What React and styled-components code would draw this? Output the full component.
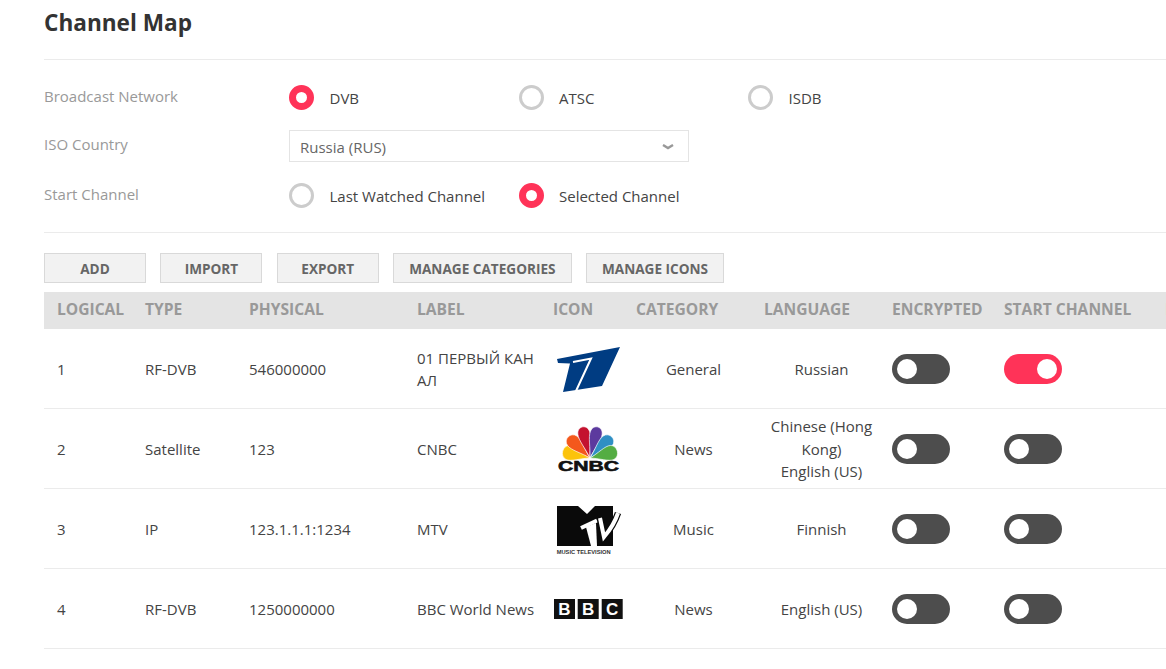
import React from 'react';
import styled, { createGlobalStyle } from 'styled-components';

const Global = createGlobalStyle`
  html, body { margin: 0; padding: 0; background: #fff; overflow: hidden; }
  body { font-family: "Open Sans", "Noto Sans", sans-serif; color: #444; }
`;

const Page = styled.div`
  width: 1400px;
  padding-left: 44px;
`;

const Title = styled.h1`
  margin: 0;
  height: 60px;
  box-sizing: border-box;
  padding-top: 6px;
  font-size: 22.6px;
  line-height: 34px;
  font-weight: 700;
  color: #333;
  border-bottom: 1px solid #ebebeb;
`;

const Form = styled.div`
  padding: 25px 0 24px;
  border-bottom: 1px solid #ebebeb;
`;

const FormRow = styled.div`
  display: flex;
  align-items: center;
  margin-bottom: ${(p) => p.$gap || 0}px;
`;

const FieldLabel = styled.div`
  width: 245px;
  font-size: 15px;
  color: #999;
  position: relative;
  top: -2px;
`;

const RadioOption = styled.label`
  width: 229.5px;
  display: flex;
  align-items: center;
  font-size: 15px;
  color: #444;
`;

const RadioMark = styled.span`
  width: 25px;
  height: 25px;
  box-sizing: border-box;
  border-radius: 50%;
  margin-right: 15.5px;
  border: ${(p) => (p.$on ? '7.5px solid #ff3358' : '3px solid #ccc')};
  background: #fff;
`;

const Select = styled.div`
  width: 400px;
  height: 32px;
  box-sizing: border-box;
  border: 1px solid #e4e4e4;
  padding: 1px 14px 0 10px;
  display: flex;
  align-items: center;
  justify-content: space-between;
  font-size: 15px;
  color: #666;
`;

const Toolbar = styled.div`
  display: flex;
  gap: 14.4px;
  padding-top: 20px;
  margin-bottom: 9px;
`;

const Button = styled.button`
  height: 30px;
  min-width: 102px;
  box-sizing: border-box;
  padding: 0 15px;
  border: 1.5px solid #d9d9d9;
  background: #f2f2f2;
  color: #666;
  font-family: inherit;
  font-size: 13.6px;
  font-weight: 700;
`;

const columns = '88px 104px 168px 136px 83px 128px 128px 112px 161px 120px';

const HeadRow = styled.div`
  display: grid;
  grid-template-columns: ${columns};
  height: 37px;
  box-sizing: border-box;
  padding-bottom: 4px;
  align-items: center;
  background: #e4e4e4;
`;

const HeadCell = styled.div`
  padding-left: 13px;
  font-size: 15.6px;
  font-weight: 700;
  color: #999;
  white-space: nowrap;
`;

const Row = styled.div`
  display: grid;
  grid-template-columns: ${columns};
  height: 80px;
  box-sizing: border-box;
  align-items: center;
  border-bottom: 1px solid #ebebeb;
`;

const Cell = styled.div`
  padding-left: 13px;
  font-size: 15px;
  line-height: 22.5px;
  color: #444;
  text-align: ${(p) => (p.$center ? 'center' : 'left')};
  word-break: break-all;
`;

const TextCell = styled(Cell)`
  padding-top: 1px;
`;

const LangCell = styled(TextCell)`
  word-break: normal;
`;

const LogoCell = styled.div`
  padding-left: 13px;
  height: 50px;
`;

const Logo = styled.svg`
  display: block;
  width: 70px;
  height: 50px;
`;

const Toggle = styled.span`
  display: flex;
  width: 58px;
  height: 30px;
  box-sizing: border-box;
  padding: 5px;
  border-radius: 15px;
  background: ${(p) => (p.$on ? '#ff3358' : '#4d4d4d')};
  justify-content: ${(p) => (p.$on ? 'flex-end' : 'flex-start')};
  &::after {
    content: '';
    width: 20px;
    height: 20px;
    border-radius: 50%;
    background: #fff;
  }
`;

function FirstLogo() {
  return (
    <Logo viewBox="0 0 70 50">
      <polygon points="4,15 67,3 49,42 10,48 17,19.5 5,19" fill="#003c82" />
      <polyline points="20,18 38,14.5 23,47" fill="none" stroke="#fff" strokeWidth="2" />
    </Logo>
  );
}

const feathers = [
  ['#fcc30b', -76, 1.2, 0.88],
  ['#f4581c', -46, 1.1, 0.95],
  ['#c4122f', -14, 1, 1],
  ['#5c3a9e', 14, 1, 1],
  ['#2f8fc4', 46, 1.1, 0.95],
  ['#54ad43', 76, 1.2, 0.88],
];

function CnbcLogo() {
  return (
    <Logo viewBox="0 0 70 50">
      {feathers.map(([color, angle, sx, sy]) => (
        <path
          key={color}
          d="M0 0C-2 -10 -7 -20 -6 -26C-5 -34 5 -34 6 -26C7 -20 2 -10 0 0Z"
          fill={color}
          stroke="#fff"
          strokeWidth="0.6"
          transform={`translate(37 34) rotate(${angle}) scale(${sx} ${sy})`}
        />
      ))}
      <text x="5" y="47" fontFamily="Liberation Sans" fontWeight="700" fontSize="14" textLength="61" lengthAdjust="spacingAndGlyphs" stroke="#111" strokeWidth="0.6" fill="#111">CNBC</text>
    </Logo>
  );
}

function MtvLogo() {
  return (
    <Logo viewBox="0 0 70 50">
      <polygon points="4,2 25,2 34,10 42,2 60,2 60,42 4,42" fill="#0a0a0a" />
      <path d="M28 24L44 16.5" fill="none" stroke="#fff" strokeWidth="4" />
      <polygon points="33,23 43,19 44,42 38,42" fill="#fff" />
      <path d="M47 14L51 33C57 26 62 18 65 9" fill="none" stroke="#0a0a0a" strokeWidth="6.5" />
      <path d="M47 14L51 33C57 26 62 18 65 9" fill="none" stroke="#fff" strokeWidth="4" />
      <text x="3.7" y="49.5" fontFamily="Liberation Sans" fontWeight="700" fontSize="6" textLength="54" lengthAdjust="spacingAndGlyphs" fill="#333">MUSIC TELEVISION</text>
    </Logo>
  );
}

const bbcBoxes = [['B', 1], ['B', 24.7], ['C', 48.7]];

function BbcLogo() {
  return (
    <Logo viewBox="0 0 70 50">
      {bbcBoxes.map(([letter, x]) => (
        <g key={x}>
          <rect x={x} y="15" width="21" height="20" fill="#111" />
          <text x={x + 10.5} y="31" textAnchor="middle" fontFamily="Liberation Sans" fontWeight="700" fontSize="17" fill="#fff">{letter}</text>
        </g>
      ))}
    </Logo>
  );
}

const heads = ['LOGICAL', 'TYPE', 'PHYSICAL', 'LABEL', 'ICON', 'CATEGORY', 'LANGUAGE', 'ENCRYPTED', 'START CHANNEL', 'DELETE'];

const channels = [
  { n: 1, type: 'RF-DVB', physical: '546000000', label: '01 ПЕРВЫЙ КАНАЛ', logo: <FirstLogo />, category: 'General', lang: ['Russian'], start: true },
  { n: 2, type: 'Satellite', physical: '123', label: 'CNBC', logo: <CnbcLogo />, category: 'News', lang: ['Chinese (Hong', 'Kong)', 'English (US)'] },
  { n: 3, type: 'IP', physical: '123.1.1.1:1234', label: 'MTV', logo: <MtvLogo />, category: 'Music', lang: ['Finnish'] },
  { n: 4, type: 'RF-DVB', physical: '1250000000', label: 'BBC World News', logo: <BbcLogo />, category: 'News', lang: ['English (US)'] },
];

export default function App() {
  return (
    <Page>
      <Global />
      <Title>Channel Map</Title>
      <Form>
        <FormRow $gap={20}>
          <FieldLabel>Broadcast Network</FieldLabel>
          <RadioOption><RadioMark $on />DVB</RadioOption>
          <RadioOption><RadioMark />ATSC</RadioOption>
          <RadioOption><RadioMark />ISDB</RadioOption>
        </FormRow>
        <FormRow $gap={21}>
          <FieldLabel>ISO Country</FieldLabel>
          <Select>
            Russia (RUS)
            <svg width="12" height="6" viewBox="0 0 12 6">
              <path d="M1 1L6 4L11 1" fill="none" stroke="#999" strokeWidth="2.4" />
            </svg>
          </Select>
        </FormRow>
        <FormRow>
          <FieldLabel>Start Channel</FieldLabel>
          <RadioOption><RadioMark />Last Watched Channel</RadioOption>
          <RadioOption><RadioMark $on />Selected Channel</RadioOption>
        </FormRow>
      </Form>
      <Toolbar>
        <Button>ADD</Button>
        <Button>IMPORT</Button>
        <Button>EXPORT</Button>
        <Button>MANAGE CATEGORIES</Button>
        <Button>MANAGE ICONS</Button>
      </Toolbar>
      <HeadRow>
        {heads.map((h) => <HeadCell key={h}>{h}</HeadCell>)}
      </HeadRow>
      {channels.map((c) => (
        <Row key={c.n}>
          <TextCell>{c.n}</TextCell>
          <TextCell>{c.type}</TextCell>
          <TextCell>{c.physical}</TextCell>
          <TextCell>{c.label}</TextCell>
          <LogoCell>{c.logo}</LogoCell>
          <TextCell $center>{c.category}</TextCell>
          <LangCell $center>
            {c.lang.map((l) => <div key={l}>{l}</div>)}
          </LangCell>
          <Cell><Toggle /></Cell>
          <Cell><Toggle $on={c.start} /></Cell>
        </Row>
      ))}
    </Page>
  );
}
